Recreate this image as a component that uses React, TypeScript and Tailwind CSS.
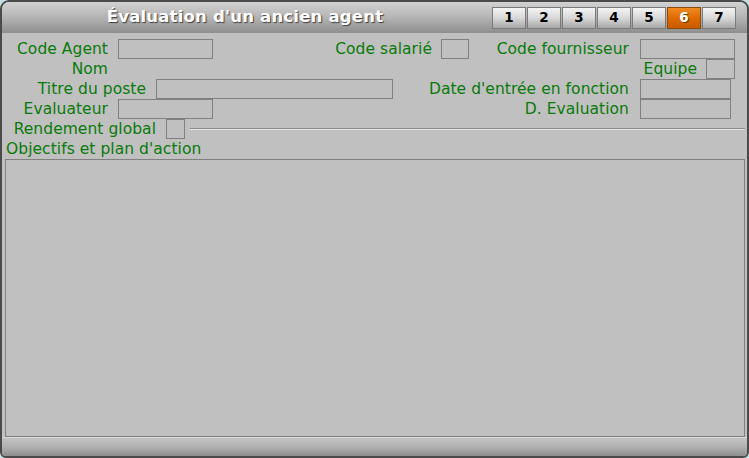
import React from "react";

const FONT = { fontFamily: '"DejaVu Sans", Verdana, sans-serif' };

function Box({ w }: { w: string }) {
  return <div className={`h-[20px] shrink-0 border border-[#808080] bg-[#c0c0c0] ${w}`} />;
}

function Label({ w, children }: { w: string; children: React.ReactNode }) {
  return (
    <div className={`shrink-0 text-right text-[15.5px] tracking-[0.05px] leading-[20px] text-[#0a7a0a] whitespace-nowrap ${w}`}>
      {children}
    </div>
  );
}

const TABS = ["1", "2", "3", "4", "5", "6", "7"];

export default function App() {
  return (
    <div className="w-[749px] h-[458px] bg-[#c4e2e2] overflow-hidden" style={FONT}>
      <div className="flex h-[458px] w-[749px] flex-col rounded-t-[9px] rounded-b-[6px] border-[2px] border-[#4a4a4a] bg-[#c0c0c0] overflow-hidden">
        {/* title bar */}
        <div className="flex h-[31px] shrink-0 items-center bg-gradient-to-b from-[#d2d2d2] via-[#b4b4b4] to-[#8e8e8e]">
          <div className="flex w-[486px] justify-center">
            <span className="text-[16.5px] font-bold text-white [text-shadow:1px_1px_1px_#404040] tracking-[0.2px]">
              Évaluation d'un ancien agent
            </span>
          </div>
          <div className="flex gap-[1px] pl-[4px]">
            {TABS.map((t) => (
              <div
                key={t}
                className={`flex h-[22px] w-[34px] items-center justify-center border text-[13.5px] font-bold ${
                  t === "6"
                    ? "border-[#8a4a10] bg-gradient-to-b from-[#f08a20] via-[#e06a00] to-[#c85a00] text-white [text-shadow:1px_1px_0_#704000]"
                    : "border-[#7a7a7a] bg-gradient-to-b from-[#f4f4f4] via-[#d8d8d8] to-[#a8a8a8] text-black"
                }`}
              >
                {t}
              </div>
            ))}
          </div>
        </div>

        {/* form */}
        <div className="flex flex-1 flex-col pt-[6px] -ml-[2px]">
          <div className="flex h-[20px] items-center">
            <Label w="w-[108px]">Code Agent</Label>
            <div className="ml-[10px]"><Box w="w-[95px]" /></div>
            <Label w="w-[219px]">Code salarié</Label>
            <div className="ml-[9px]"><Box w="w-[28px]" /></div>
            <Label w="w-[160px]">Code fournisseur</Label>
            <div className="ml-[11px]"><Box w="w-[95px]" /></div>
          </div>
          <div className="flex h-[20px] items-center">
            <Label w="w-[108px]">Nom</Label>
            <Label w="w-[589px]">Equipe</Label>
            <div className="ml-[9px]"><Box w="w-[29px]" /></div>
          </div>
          <div className="flex h-[20px] items-center">
            <Label w="w-[146px]">Titre du poste</Label>
            <div className="ml-[10px]"><Box w="w-[237px]" /></div>
            <Label w="w-[236px]">Date d'entrée en fonction</Label>
            <div className="ml-[11px]"><Box w="w-[91px]" /></div>
          </div>
          <div className="flex h-[20px] items-center">
            <Label w="w-[108px]">Evaluateur</Label>
            <div className="ml-[10px]"><Box w="w-[95px]" /></div>
            <Label w="w-[416px]">D. Evaluation</Label>
            <div className="ml-[11px]"><Box w="w-[91px]" /></div>
          </div>
          <div className="flex h-[20px] items-center">
            <Label w="w-[156px]">Rendement global</Label>
            <div className="ml-[10px]"><Box w="w-[19px]" /></div>
            <div className="ml-[5px] mr-[2px] flex-1 border-t border-b border-t-[#8c8c8c] border-b-[#e4e4e4]" />
          </div>
          <div className="h-[20px] pl-[6px] text-[15.5px] tracking-[0.05px] leading-[20px] text-[#0a7a0a]">
            Objectifs et plan d'action
          </div>
          <div className="ml-[5px] mr-[2px] h-[278px] border border-[#808080] bg-[#c0c0c0]" />
        </div>

        {/* bottom bar */}
        <div className="h-[19px] shrink-0 border-t border-[#d8d8d8] bg-gradient-to-b from-[#c4c4c4] via-[#b0b0b0] to-[#8e8e8e]" />
      </div>
    </div>
  );
}
